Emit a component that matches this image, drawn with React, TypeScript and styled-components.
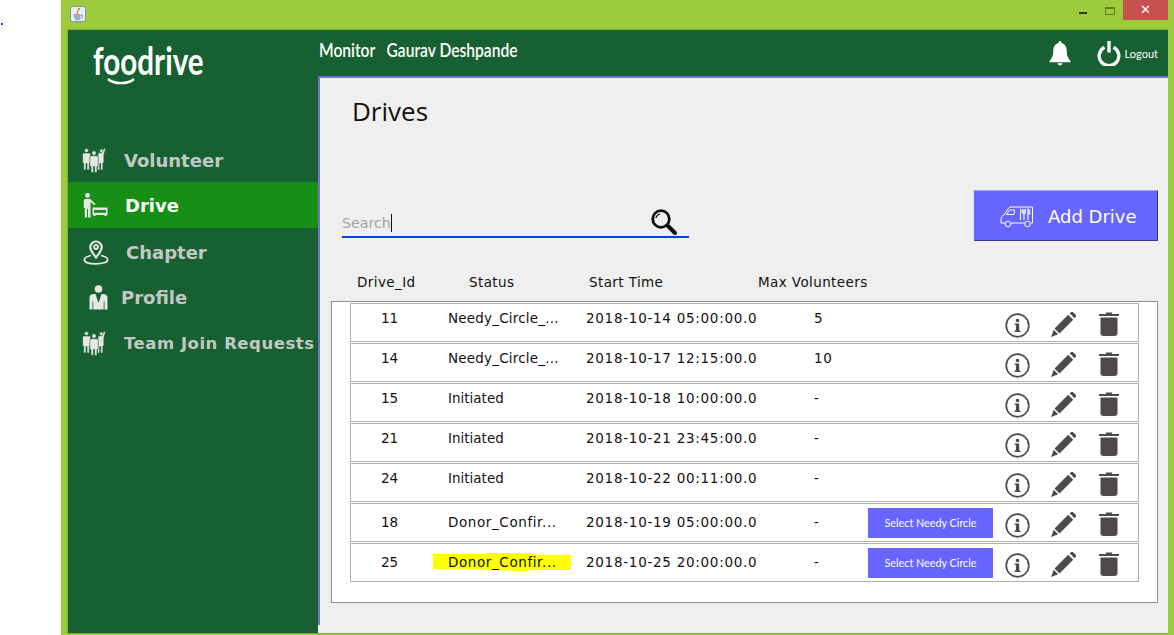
import React from "react";
import styled, { createGlobalStyle } from "styled-components";

type Drive = {
  id: number;
  status: string;
  start: string;
  max: string;
  spread: number;
  select?: boolean;
  mark?: boolean;
};

const drives: Drive[] = [
  { id: 11, status: "Needy_Circle_...", start: "2018-10-14 05:00:00.0", max: "5", spread: 0.2 },
  { id: 14, status: "Needy_Circle_...", start: "2018-10-17 12:15:00.0", max: "10", spread: 0.2 },
  { id: 15, status: "Initiated", start: "2018-10-18 10:00:00.0", max: "-", spread: 0 },
  { id: 21, status: "Initiated", start: "2018-10-21 23:45:00.0", max: "-", spread: 0 },
  { id: 24, status: "Initiated", start: "2018-10-22 00:11:00.0", max: "-", spread: 0 },
  { id: 18, status: "Donor_Confir...", start: "2018-10-19 05:00:00.0", max: "-", spread: 0.6, select: true },
  { id: 25, status: "Donor_Confir...", start: "2018-10-25 20:00:00.0", max: "-", spread: 0.6, select: true, mark: true },
];

const TeamIcon = () => (
  <svg width="24" height="25" viewBox="0 0 24 25" fill="#e6e8e4" stroke="#176032" strokeWidth="0.6">
    <circle cx="4.500" cy="2.600" r="2" />
    <path d="M.6 6.500c0-1 .7-1.500 1.600-1.500h4.600c1 0 1.700.5 1.700 1.500v8.500H7.300v7H5v-6.500h-1V22H1.700v-7H.6z" />
    <circle cx="19.500" cy="2.800" r="1.900" />
    <path d="M16 6c0-.8.6-1.200 1.400-1.200h2.400L22 .2l1.600.8-1.700 5.500v8.500h-1v7h-2.200v-6.500h-1V22h-2.200v-7H15.500z" />
    <circle cx="12" cy="5" r="2.200" />
    <path d="M7.800 9.500c0-1.200.9-1.800 2-1.800h4.400c1.100 0 2 .6 2 1.800v9h-1.200v6h-2.400v-6h-1.200v6H9v-6H7.800z" />
  </svg>
);

const DriveIcon = () => (
  <svg width="25" height="25" viewBox="0 0 25 25" fill="#e6e8e4">
    <circle cx="4.500" cy="2.500" r="2.400" />
    <path d="M.8 7.500c0-1 .7-1.600 1.700-1.600h4.700l5.300 5.200-1 1.100L7.500 9v15.500H5v-8.600h-1v8.600H1.800V15H.8z" />
    <path d="M9.500 14.500h15v7.500h-1v1h-2v-1h-9v1h-2v-1h-1z" />
    <rect x="11" y="17" width="12" height="2.800" fill="#178f17" />
  </svg>
);

const PinIcon = () => (
  <svg width="26" height="25" viewBox="0 0 26 25" fill="none" stroke="#e6e8e4">
    <path d="M13 17.500c-3-4-5.700-7-5.700-10.300a5.700 5.700 0 0 1 11.400 0c0 3.300-2.700 6.300-5.700 10.300z" strokeWidth="2.200" />
    <circle cx="13" cy="7" r="2" strokeWidth="1.800" />
    <path d="M8 15.500c-3.800.8-6.700 2.400-6.700 4.400 0 2.300 5.200 3.900 11.700 3.900s11.700-1.600 11.700-3.900c0-2-2.900-3.600-6.700-4.400" strokeWidth="1.700" />
  </svg>
);

const ProfileIcon = () => (
  <svg width="19" height="25" viewBox="0 0 19 25" fill="#e6e8e4">
    <circle cx="9.500" cy="4" r="3.800" />
    <path d="M.5 12.500c0-2.400 2-3.500 5-3.500h1L8.500 15l1 3 1-3 2-6h1c3 0 5 1.100 5 3.500v12h-3v-8h-.8v8H4.300v-8h-.8v8h-3z" />
  </svg>
);

const BellIcon = () => (
  <svg width="22" height="25" viewBox="0 0 22 25" fill="#fff">
    <path d="M11 0c1 0 1.500.9 1.500 2.100 3.500 1 5.200 3.700 5.200 7.500 0 5 1.400 8 3.800 10.400v1.200H.5V20c2.400-2.400 3.800-5.400 3.800-10.400 0-3.800 1.700-6.500 5.200-7.500C9.500.9 10 0 11 0z" />
    <path d="M8.500 22.300h5c-.3 1.300-1.200 2.200-2.500 2.200s-2.200-.9-2.500-2.200z" />
  </svg>
);

const PowerIcon = () => (
  <svg width="24" height="25" viewBox="0 0 24 25" fill="none" stroke="#f4f6f2" strokeWidth="3.400">
    <path d="M7.500 6.200a9.800 9.800 0 1 0 9 0" />
    <path d="M12 0v11.500" />
  </svg>
);

const SearchIcon = () => (
  <svg width="26" height="26" viewBox="0 0 26 26" fill="none" stroke="#111">
    <circle cx="10" cy="10" r="8.300" strokeWidth="2.800" />
    <path d="M5 9a5 5 0 0 1 4-4" strokeWidth="1.200" />
    <path d="M17 17l7 7" strokeWidth="4" strokeLinecap="round" />
  </svg>
);

const VanIcon = () => (
  <svg width="34" height="22" viewBox="0 0 34 22" fill="none" stroke="#fff" strokeWidth="1">
    <path d="M1 17v-4c0-2 1-3 3-4l4-6c.6-1 1.500-2 3-2h21.500v16H31" />
    <path d="M24.500 17H11M5 17H1" />
    <path d="M6.500 8.500l3-4.500h5l-.5 4.500z" />
    <circle cx="8" cy="18" r="2.800" />
    <circle cx="27.500" cy="18" r="2.800" />
    <path d="M24 3v5M22.500 3v3c0 1 .7 1.500 1.500 1.500s1.500-.5 1.500-1.500V3M24 8v6" strokeWidth="1.100" />
    <path d="M28 3c1.500 0 1.700 2 1.700 5H28zM28 8v6M20 3c1 0 1 3 .5 5v6" strokeWidth="1.100" />
  </svg>
);

const InfoIcon = () => (
  <svg width="25" height="25" viewBox="0 0 25 25" fill="#4f4a4a">
    <circle cx="12.500" cy="12.500" r="11.300" fill="none" stroke="#4f4a4a" strokeWidth="1.700" />
    <circle cx="12.500" cy="7.500" r="1.800" />
    <path d="M9.800 10.500h4.400v7h1.200v1.600H9.600v-1.600h1.300v-5.400H9.800z" />
  </svg>
);

const PencilIcon = () => (
  <svg width="25" height="25" viewBox="0 0 25 25" fill="#4f4a4a">
    <path d="M18.600 1.300l1.300-1a2 2 0 0 1 2.500.2l2 2a2 2 0 0 1 .2 2.500l-1 1.300z" />
    <path d="M17.200 2.800l5 5L8.500 21.400l-5-5z" />
    <path d="M2.700 17.800l4.500 4.500L0 25z" />
  </svg>
);

const TrashIcon = () => (
  <svg width="20" height="24" viewBox="0 0 20 24" fill="#4f4a4a">
    <path d="M0 2h7V.6h6V2h7v2H0z" />
    <path d="M1.500 5.500h17V21a3 3 0 0 1-3 3h-11a3 3 0 0 1-3-3z" />
  </svg>
);

const JavaIcon = () => (
  <svg width="16" height="16" viewBox="0 0 16 16">
    <rect x=".5" y=".5" width="15" height="15" rx="2" fill="#e8eef6" stroke="#7f93ad" />
    <path d="M9 2c1 2-2.500 3-1.500 5.500C6 5.500 9.500 4.500 9 2z" fill="#e8641c" stroke="#e8641c" />
    <path d="M3.500 9h7M4 11h6M5 13h5M11 9c2 0 2 2.500-.5 3" stroke="#4c6f93" fill="none" />
  </svg>
);

const GlobalStyle = createGlobalStyle`
  html, body {
    margin: 0;
    padding: 0;
    background: #fff;
    overflow: hidden;
  }
  * {
    box-sizing: border-box;
  }
`;

const Page = styled.div`
  display: flex;
  width: 1174px;
  height: 635px;
  font-family: "DejaVu Sans", sans-serif;
`;

const Gutter = styled.div`
  width: 61px;
  padding: 23px 0 0 1px;
`;

const Dot = styled.div`
  width: 2px;
  height: 2px;
  background: #3333cc;
`;

const Window = styled.div`
  flex: 1;
  display: flex;
  flex-direction: column;
  background: #9ccc3c;
  padding: 0 6px 1px 6px;
`;

const TitleBar = styled.div`
  height: 29px;
  flex-shrink: 0;
  display: flex;
  align-items: flex-start;
  justify-content: space-between;
  padding: 6px 0 0 3px;
`;

const WindowControls = styled.div`
  display: flex;
  align-items: flex-start;
  margin-top: -6px;
`;

const MinButton = styled.div`
  width: 8px;
  height: 2px;
  margin: 12px 18px 0 0;
  background: #2a3a20;
`;

const MaxButton = styled.div`
  width: 10px;
  height: 8px;
  margin: 7px 8px 0 0;
  border: 1px solid #5f7d2a;
  border-top-width: 2px;
`;

const CloseButton = styled.div`
  width: 45px;
  height: 20px;
  background: #c75050;
  color: #fff;
  font: bold 13px/20px "DejaVu Sans", sans-serif;
  text-align: center;
`;

const Body = styled.div`
  flex: 1;
  display: flex;
  border: 1px solid #7fae34;
  border-right: none;
  background: #176032;
  min-height: 0;
`;

const Sidebar = styled.nav`
  width: 250px;
  flex-shrink: 0;
  display: flex;
  flex-direction: column;
`;

const Brand = styled.div`
  position: relative;
  height: 106px;
  padding: 6px 0 0 25px;
  color: #fff;
  font: 700 39px/48px "Lato", sans-serif;
`;

const BrandName = styled.span`
  display: inline-block;
  transform: scaleX(0.76);
  transform-origin: left center;
`;

const Smile = styled.svg`
  position: absolute;
  left: 38px;
  top: 47px;
`;

const NavItem = styled.div<{ $active?: boolean; $gap: number; $pad: number; $height: number; $top?: number }>`
  height: ${(p) => p.$height}px;
  display: flex;
  align-items: center;
  gap: ${(p) => p.$gap}px;
  padding-left: ${(p) => p.$pad}px;
  padding-top: ${(p) => p.$top ?? 0}px;
  background: ${(p) => (p.$active ? "#178f17" : "transparent")};
  color: ${(p) => (p.$active ? "#fff" : "#c4c8c4")};
  font: bold 18px "DejaVu Sans", sans-serif;
  white-space: nowrap;
`;

const TeamLabel = styled.span`
  font-size: 16.5px;
  letter-spacing: 0.52px;
`;

const Main = styled.div`
  flex: 1;
  display: flex;
  flex-direction: column;
  min-width: 0;
`;

const TopBar = styled.header`
  height: 46px;
  flex-shrink: 0;
  display: flex;
  align-items: center;
  justify-content: space-between;
  padding: 0 10px 0 1px;
  color: #fff;
`;

const UserName = styled.div`
  font: 600 20px "Lato", sans-serif;
  white-space: pre;
  transform: scaleX(0.78);
  transform-origin: left center;
  margin-top: -8px;
`;

const TopActions = styled.div`
  display: flex;
  align-items: center;
`;

const BellSlot = styled.div`
  display: flex;
  margin-right: 26px;
`;

const LogoutText = styled.span`
  font: 11px "Lato", sans-serif;
  margin-left: 4px;
`;

const Panel = styled.main`
  position: relative;
  flex: 1;
  background: #efefef;
  border-top: 2px solid #6f74c4;
  padding: 0 10px 0 13px;
  display: flex;
  flex-direction: column;

  &::before {
    content: "";
    position: absolute;
    left: 0;
    top: -2px;
    width: 2px;
    height: 549px;
    background: #6f74c4;
  }
`;

const Heading = styled.h1`
  margin: 0;
  padding: 15px 0 0 21px;
  height: 111px;
  font: 400 26px "Open Sans", sans-serif;
  color: #111;
`;

const Toolbar = styled.div`
  display: flex;
  justify-content: space-between;
  align-items: flex-end;
  height: 52px;
  padding-left: 11px;
`;

const SearchBox = styled.div`
  width: 347px;
  height: 30px;
  display: flex;
  align-items: center;
  justify-content: space-between;
  margin-bottom: 3px;
  padding: 0 12px 0 0;
  border-bottom: 2px solid #0a3cf0;
`;

const SearchField = styled.div`
  color: #a4a4a4;
  font: 14.2px "DejaVu Sans", sans-serif;
  border-right: 1px solid #111;
  line-height: 18px;
  margin-top: 2px;
`;

const AddButton = styled.div`
  width: 184px;
  height: 51px;
  display: flex;
  align-items: center;
  gap: 14px;
  padding: 2px 0 0 25px;
  background: #6666ff;
  color: #fff;
  font: 18px "DejaVu Sans", sans-serif;
  border: 1px solid;
  border-color: #a3a3ff #33339a #33339a #6666ff;
`;

const Columns = styled.div`
  display: flex;
  align-items: center;
  height: 60px;
  padding-top: 22px;
  color: #111;
  font-size: 13.5px;
  letter-spacing: 0.4px;
`;

const ColumnTitle = styled.span<{ $width: number }>`
  width: ${(p) => p.$width}px;
  flex-shrink: 0;
`;

const List = styled.div`
  height: 302px;
  background: #fff;
  border: 1px solid #8a8f9a;
  padding: 1px 0 0 18px;
`;

const Row = styled.div<{ $low?: boolean }>`
  --cell-top: ${(p) => (p.$low ? 9 : 5)}px;
  width: 789px;
  height: 39px;
  margin-bottom: 1px;
  display: flex;
  align-items: flex-start;
  border: 1px solid #b0b0b0;
  color: #111;
  font-size: 13.5px;
  line-height: 18px;
`;

const IdCell = styled.div`
  width: 77px;
  text-align: center;
  padding-top: var(--cell-top);
`;

const StatusCell = styled.div`
  position: relative;
  width: 138px;
  padding-top: var(--cell-top);
  margin-left: 20px;
`;

const Marker = styled.span`
  position: absolute;
  left: -15px;
  top: 9px;
  width: 138px;
  height: 18px;
  background: #ffff00;
  clip-path: polygon(0 6%, 38% 6%, 40% 0, 50% 0, 70% 3%, 76% 10%, 100% 10%, 100% 94%, 72% 94%, 68% 100%, 40% 96%, 30% 90%, 0 90%);
`;

const StatusText = styled.span<{ $spread: number }>`
  position: relative;
  letter-spacing: ${(p) => p.$spread}px;
`;

const TimeCell = styled.div`
  width: 228px;
  padding-top: var(--cell-top);
  letter-spacing: 0.72px;
`;

const MaxCell = styled.div`
  width: 54px;
  padding-top: var(--cell-top);
  letter-spacing: 0.6px;
`;

const SelectSlot = styled.div`
  width: 125px;
  margin-right: 12px;
`;

const SelectButton = styled.div`
  height: 30px;
  margin-top: 4px;
  background: #6666ff;
  color: #fff;
  font: 10.8px/30px "Lato", sans-serif;
  text-align: center;
`;

const Actions = styled.div`
  display: flex;
  align-items: flex-start;
  padding-top: 8px;
`;

const ActionSlot = styled.div<{ $width: number; $top?: number }>`
  width: ${(p) => p.$width}px;
  display: flex;
  padding-top: ${(p) => p.$top ?? 0}px;
`;

export default function App() {
  return (
    <Page>
      <GlobalStyle />
      <Gutter>
        <Dot />
      </Gutter>
      <Window>
        <TitleBar>
          <JavaIcon />
          <WindowControls>
            <MinButton />
            <MaxButton />
            <CloseButton>✕</CloseButton>
          </WindowControls>
        </TitleBar>
        <Body>
          <Sidebar>
            <Brand>
              <BrandName>foodrive</BrandName>
              <Smile width="30" height="10" viewBox="0 0 30 10" fill="none" stroke="#fff" strokeWidth="2.4">
                <path d="M2 2c6 5.500 20 5.500 26 0" />
              </Smile>
            </Brand>
            <NavItem $gap={18} $pad={14} $height={46} $top={2}>
              <TeamIcon />
              Volunteer
            </NavItem>
            <NavItem $active $gap={17} $pad={15} $height={46}>
              <DriveIcon />
              Drive
            </NavItem>
            <NavItem $gap={17} $pad={15} $height={47} $top={1}>
              <PinIcon />
              Chapter
            </NavItem>
            <NavItem $gap={13} $pad={21} $height={45}>
              <ProfileIcon />
              Profile
            </NavItem>
            <NavItem $gap={18} $pad={14} $height={46}>
              <TeamIcon />
              <TeamLabel>Team Join Requests</TeamLabel>
            </NavItem>
          </Sidebar>
          <Main>
            <TopBar>
              <UserName>{"Monitor   Gaurav Deshpande"}</UserName>
              <TopActions>
                <BellSlot>
                  <BellIcon />
                </BellSlot>
                <PowerIcon />
                <LogoutText>Logout</LogoutText>
              </TopActions>
            </TopBar>
            <Panel>
              <Heading>Drives</Heading>
              <Toolbar>
                <SearchBox>
                  <SearchField>Search</SearchField>
                  <SearchIcon />
                </SearchBox>
                <AddButton>
                  <VanIcon />
                  Add Drive
                </AddButton>
              </Toolbar>
              <Columns>
                <ColumnTitle $width={26} />
                <ColumnTitle $width={112}>Drive_Id</ColumnTitle>
                <ColumnTitle $width={120}>Status</ColumnTitle>
                <ColumnTitle $width={169}>Start Time</ColumnTitle>
                <ColumnTitle $width={130}>Max Volunteers</ColumnTitle>
              </Columns>
              <List>
                {drives.map((d) => (
                  <Row key={d.id} $low={d.select}>
                    <IdCell>{d.id}</IdCell>
                    <StatusCell>
                      {d.mark && <Marker />}
                      <StatusText $spread={d.spread}>{d.status}</StatusText>
                    </StatusCell>
                    <TimeCell>{d.start}</TimeCell>
                    <MaxCell>{d.max}</MaxCell>
                    <SelectSlot>{d.select && <SelectButton>Select Needy Circle</SelectButton>}</SelectSlot>
                    <Actions>
                      <ActionSlot $width={46} $top={1}>
                        <InfoIcon />
                      </ActionSlot>
                      <ActionSlot $width={48}>
                        <PencilIcon />
                      </ActionSlot>
                      <ActionSlot $width={20}>
                        <TrashIcon />
                      </ActionSlot>
                    </Actions>
                  </Row>
                ))}
              </List>
            </Panel>
          </Main>
        </Body>
      </Window>
    </Page>
  );
}
